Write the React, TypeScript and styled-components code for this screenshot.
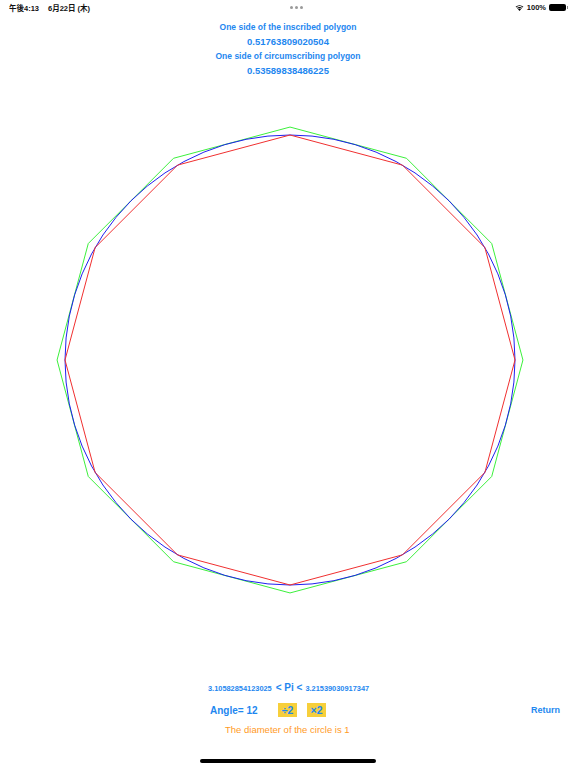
import styled, { createGlobalStyle } from 'styled-components';

const GlobalStyle = createGlobalStyle`
  html, body {
    margin: 0;
    padding: 0;
    background: #fff;
  }
  body {
    font-family: "Helvetica Neue", "Liberation Sans", Arial, "Noto Sans CJK JP", sans-serif;
  }
`;

const Page = styled.div`
  width: 576px;
  height: 768px;
  display: flex;
  flex-direction: column;
  position: relative;
  overflow: hidden;
`;

const StatusBar = styled.div`
  height: 14px;
  padding: 0 8px 0 9px;
  display: flex;
  align-items: center;
  justify-content: space-between;
  font-family: "Liberation Sans", "Noto Sans CJK JP", sans-serif;
  font-size: 7.5px;
  font-weight: 600;
  color: #111;
`;

const StatusLeft = styled.div`
  width: 120px;
  display: flex;
  gap: 9px;
`;

const Dots = styled.div`
  display: flex;
  gap: 2px;
  margin-left: 16px;
  span {
    width: 3px;
    height: 3px;
    border-radius: 50%;
    background: #9a9a9a;
  }
`;

const StatusRight = styled.div`
  width: 120px;
  display: flex;
  justify-content: flex-end;
  align-items: center;
  gap: 3px;
`;

const Battery = styled.div`
  display: flex;
  align-items: center;
  gap: 1px;
  .body {
    width: 17px;
    height: 7px;
    border-radius: 2px;
    background: #000;
  }
  .cap {
    width: 1px;
    height: 3px;
    background: #888;
  }
`;

const Header = styled.div`
  display: flex;
  flex-direction: column;
  align-items: center;
  margin-top: 6px;
  color: #1e87f0;
  font-weight: bold;
  font-family: "Liberation Sans", Arial, sans-serif;
`;

const Caption = styled.div`
  font-size: 8.5px;
  line-height: 14px;
  height: 15px;
`;

const Value = styled.div`
  font-size: 9.5px;
  line-height: 14px;
  height: 14px;
`;

const Canvas = styled.div`
  height: 560px;
  margin-top: 2px;
  svg {
    display: block;
  }
`;

const Spacer = styled.div`
  flex: 1;
`;

const PiRow = styled.div`
  display: flex;
  align-items: baseline;
  padding-left: 208px;
  color: #1e87f0;
  font-weight: bold;
  font-family: "Liberation Sans", Arial, sans-serif;
`;

const Small = styled.span`
  font-size: 7.4px;
`;

const PiText = styled.span`
  font-size: 10px;
  margin: 0 3px 0 4px;
`;

const ControlRow = styled.div`
  display: flex;
  align-items: center;
  margin-top: 10px;
  padding-left: 210px;
  color: #1e87f0;
  font-weight: bold;
  font-family: "Liberation Sans", Arial, sans-serif;
`;

const Angle = styled.span`
  font-size: 10px;
  width: 68px;
`;

const OpButton = styled.button`
  background: #f7cf3b;
  color: #1e87f0;
  border: none;
  padding: 0;
  width: 19px;
  height: 14px;
  margin-right: 10px;
  font-size: 10.5px;
  font-weight: bold;
  font-family: "Liberation Sans", Arial, sans-serif;
  display: flex;
  align-items: center;
  justify-content: center;
`;

const ReturnLink = styled.span`
  margin-left: auto;
  margin-right: 16px;
  font-size: 9px;
`;

const Note = styled.div`
  margin-top: 7px;
  padding-left: 225px;
  color: #ff9a1f;
  font-size: 9.5px;
  font-family: "Liberation Sans", Arial, sans-serif;
`;

const HomeBar = styled.div`
  width: 176px;
  height: 4px;
  border-radius: 2px;
  background: #000;
  margin: 24px 0 5px 200px;
`;

const CX = 290;
const CY = 280;
const R = 225;
const N = 12;

const polygon = (radius: number) =>
  Array.from({ length: N }, (_, i) => {
    const a = (Math.PI * 2 * i) / N;
    return `${(CX + radius * Math.sin(a)).toFixed(2)},${(CY - radius * Math.cos(a)).toFixed(2)}`;
  }).join(' ');

const App = () => {
  const outer = R / Math.cos(Math.PI / N);
  return (
    <Page>
      <GlobalStyle />
      <StatusBar>
        <StatusLeft>
          <span>午後4:13</span>
          <span>6月22日 (木)</span>
        </StatusLeft>
        <Dots>
          <span />
          <span />
          <span />
        </Dots>
        <StatusRight>
          <svg width="9" height="7" viewBox="0 0 12 9">
            <path d="M6 9 L4 6.8 A3 3 0 0 1 8 6.8 Z" fill="#000" />
            <path d="M2.6 5.3 A5 5 0 0 1 9.4 5.3 L8.5 6.2 A3.8 3.8 0 0 0 3.5 6.2 Z" fill="#000" />
            <path d="M0.8 3.5 A7.6 7.6 0 0 1 11.2 3.5 L10.2 4.5 A6.2 6.2 0 0 0 1.8 4.5 Z" fill="#000" />
          </svg>
          <span>100%</span>
          <Battery>
            <div className="body" />
            <div className="cap" />
          </Battery>
        </StatusRight>
      </StatusBar>

      <Header>
        <Caption>One side of the inscribed polygon</Caption>
        <Value>0.51763809020504</Value>
        <Caption>One side of circumscribing polygon</Caption>
        <Value>0.53589838486225</Value>
      </Header>

      <Canvas>
        <svg width="576" height="560">
          <polygon points={polygon(outer)} fill="none" stroke="#3cf03c" strokeWidth="1" />
          <circle cx={CX} cy={CY} r={R} fill="none" stroke="#2020f0" strokeWidth="1" />
          <polygon points={polygon(R)} fill="none" stroke="#f03030" strokeWidth="1" />
        </svg>
      </Canvas>

      <Spacer />

      <PiRow>
        <Small>3.10582854123025</Small>
        <PiText>&lt; Pi &lt;</PiText>
        <Small>3.21539030917347</Small>
      </PiRow>

      <ControlRow>
        <Angle>Angle= 12</Angle>
        <OpButton>÷2</OpButton>
        <OpButton>×2</OpButton>
        <ReturnLink>Return</ReturnLink>
      </ControlRow>

      <Note>The diameter of the circle is 1</Note>

      <HomeBar />
    </Page>
  );
};

export default App;
